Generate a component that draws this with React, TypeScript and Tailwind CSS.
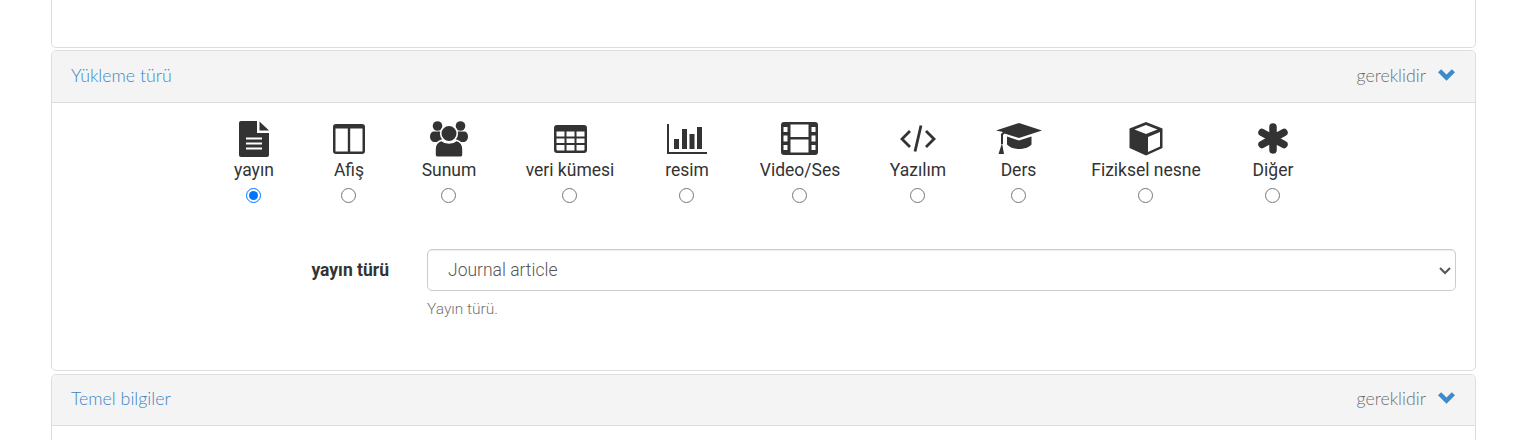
import { FC, ReactNode } from 'react'

const Chevron: FC = () => (
  <svg viewBox="0 0 16 11" className="w-[17px] h-[12px] ml-3 mb-[2px] fill-[#3d8bcd]">
    <path d="M8 11 0 3 3 0 8 5 13 0 16 3Z" />
  </svg>
)

const IconFile: FC = () => (
  <svg viewBox="0 0 30 36" className="w-[30px] h-[36px]">
    <path fill="#333" d="M0 2C0 .9.9 0 2 0H18V12H30V34C30 35.100 29.100 36 28 36H2C.9 36 0 35.100 0 34Z" />
    <path fill="#333" d="M20.500 .5 30 9.500H20.500Z" />
    <path stroke="#fff" strokeWidth="2" d="M7 17.500H23M7 22.500H23M7 27.500H23" />
  </svg>
)

const IconColumns: FC = () => (
  <svg viewBox="0 0 32 30" className="w-[32px] h-[30px]">
    <rect width="32" height="30" rx="3" fill="#333" />
    <path fill="#fff" d="M2.500 4.500H14.800V27.500H2.500ZM17.200 4.500H29.500V27.500H17.200Z" />
  </svg>
)

const IconUsers: FC = () => (
  <svg viewBox="0 0 38 36" className="w-[38px] h-[36px] fill-[#333]">
    <circle cx="7.500" cy="5" r="4.800" />
    <circle cx="30.500" cy="5" r="4.800" />
    <path d="M4 10.500h8v10.500H5c-3 0-5-2-5-5.500 0-3 1.500-5 4-5z" />
    <path d="M34 10.500h-8v10.500h7c3 0 5-2 5-5.500 0-3-1.500-5-4-5z" />
    <circle cx="19" cy="12.500" r="8.300" stroke="#fff" strokeWidth="1.600" />
    <path stroke="#fff" strokeWidth="1.600" d="M11.500 19.300c2 1.700 4.800 2.600 7.500 2.600s5.500-.9 7.500-2.600c4 1.200 6.500 4.700 6.500 8.700v6c0 1.400-1 2.200-2.200 2.200H7.200C6 36.200 5 35.400 5 34v-6c0-4 2.500-7.500 6.500-8.700z" />
  </svg>
)

const IconTable: FC = () => (
  <svg viewBox="0 0 33 28" className="w-[33px] h-[28px] ml-[1px]">
    <rect width="33" height="28" rx="3" fill="#333" />
    <path fill="#fff" d="M2.500 6.500h8v5h-8zM12.500 6.500h8v5h-8zM22.500 6.500h8v5h-8zM2.500 13.500h8v4.500h-8zM12.500 13.500h8v4.500h-8zM22.500 13.500h8v4.500h-8zM2.500 20h8v5.500h-7q-1 0-1-1zM12.500 20h8v5.500h-8zM22.500 20h8v4.500q0 1-1 1h-7z" />
  </svg>
)

const IconChart: FC = () => (
  <svg viewBox="0 0 40 30" className="w-[40px] h-[30px] fill-[#333]">
    <path d="M0 0H2V28H40V30H0Z" />
    <path d="M7 15h5v10H7zM15 5h5v20h-5zM22.500 10h5v15h-5zM30 3h5v22h-5z" />
  </svg>
)

const IconFilm: FC = () => (
  <svg viewBox="0 0 37 33" className="w-[37px] h-[33px]">
    <rect width="37" height="33" rx="3" fill="#333" />
    <path fill="#fff" d="M9.500 2.500h18v12.500h-18zM9.500 17.500h18v13h-18zM2.500 5h4v5h-4zM30.500 5h4v5h-4zM2.500 13.500h4v6h-4zM30.500 13.500h4v6h-4zM2.500 23h4v5h-4zM30.500 23h4v5h-4z" />
  </svg>
)

const IconCode: FC = () => (
  <svg viewBox="0 0 36 27" className="w-[36px] h-[27px] fill-none stroke-[#333]" strokeWidth="2.800">
    <path d="M10 6 2 14 10 22M26 6 34 14 26 22M21 .5 15 26.500" />
  </svg>
)

const IconCap: FC = () => (
  <svg viewBox="0 0 46 31" className="w-[46px] h-[31px] ml-[1px] fill-[#333]">
    <path d="M23 0 46 7.500 23 15 8.500 10.500 7 12V21H5V11L7 9 0 7.500Z" />
    <path d="M11 13.500 23 17.500 35.500 13.500V21.500C33 24.500 28 26 23 26s-9.500-1.500-12-4.500Z" />
    <path d="M6 20 8 31H2.500Z" />
  </svg>
)

const IconCube: FC = () => (
  <svg viewBox="0 0 34 34" className="w-[34px] h-[34px]">
    <path fill="#333" d="M17 0 33.500 6.500V26L17 33.500 .5 26V6.500Z" />
    <path fill="#fff" d="M17 3 28.500 7.500 17 12 5.500 7.500ZM19 15 31 10V24.500L19 30Z" />
  </svg>
)

const IconAsterisk: FC = () => (
  <svg viewBox="0 0 30 31" className="w-[30px] h-[31px] fill-none stroke-[#333]" strokeWidth="7.500" strokeLinecap="round">
    <path d="M15 4V27M4 9.500 26 21.500M26 9.500 4 21.500" />
  </svg>
)

const types: { label: string; icon: ReactNode; width: string; checked?: boolean }[] = [
  { label: 'yayın', icon: <IconFile />, width: 'w-[91px]', checked: true },
  { label: 'Afiş', icon: <IconColumns />, width: 'w-[99px]' },
  { label: 'Sunum', icon: <IconUsers />, width: 'w-[101px]' },
  { label: 'veri kümesi', icon: <IconTable />, width: 'w-[141px]' },
  { label: 'resim', icon: <IconChart />, width: 'w-[93px]' },
  { label: 'Video/Ses', icon: <IconFilm />, width: 'w-[133px]' },
  { label: 'Yazılım', icon: <IconCode />, width: 'w-[103px]' },
  { label: 'Ders', icon: <IconCap />, width: 'w-[98px]' },
  { label: 'Fiziksel nesne', icon: <IconCube />, width: 'w-[157px]' },
  { label: 'Diğer', icon: <IconAsterisk />, width: 'w-[97px]' },
]

const PanelHeader: FC<{ title: string; height: string }> = ({ title, height }) => (
  <div className={`flex items-center justify-between ${height} pl-[19px] pr-[20px] bg-[#f4f4f4] border-b border-[#dddddd] rounded-t-[5px] font-['Lato',sans-serif] font-light text-[17.75px]`}>
    <span className="text-[#3d86c6]">{title}</span>
    <span className="flex items-center text-[#6e6e6e]">
      gereklidir
      <Chevron />
    </span>
  </div>
)

export default function App() {
  return (
    <div className="h-[440px] overflow-hidden bg-white pl-[51px] pr-[42px] font-['Roboto',sans-serif] text-[#333333] text-[17.5px]">
      <div className="h-[50px] -mt-[2px] mb-[2px] border border-[#dddddd] rounded-b-[5px] border-t-0" />
      <div className="h-[321px] border border-[#dddddd] rounded-[5px] mb-[3px]">
        <PanelHeader title="Yükleme türü" height="h-[52px] pb-[2px]" />
        <div className="flex pt-[17px] pl-[156px]">
          {types.map((t) => (
            <label key={t.label} className={`flex flex-col items-center ${t.width}`}>
              <span className="flex items-center justify-center h-[37px]">{t.icon}</span>
              <span className="mt-[1px] pl-[1px] leading-[24px] whitespace-nowrap">{t.label}</span>
              <input type="radio" name="type" defaultChecked={t.checked} className="mt-[6px] w-[15px] h-[15px] accent-[#0075ff]" />
            </label>
          ))}
        </div>
        <div className="flex mt-[46px] px-[19px]">
          <div className="w-[319px] pt-[9px] pr-[1px] text-right font-bold leading-[24px]">yayın türü</div>
          <div className="flex-1 ml-[37px]">
            <div className="relative">
              <select className="appearance-none w-full h-[42px] pl-[20px] pr-8 border border-[#cccccc] rounded-[5px] bg-white text-[#555555] text-[17.5px] font-light shadow-[inset_0_1px_1px_rgba(0,0,0,0.075)]">
                <option>Journal article</option>
              </select>
              <svg viewBox="0 0 12 8" className="absolute right-[5px] top-[18px] w-[12px] h-[8px] fill-none stroke-[#555555]" strokeWidth="2">
                <path d="M1 1 6 6 11 1" />
              </svg>
            </div>
            <p className="mt-[8px] text-[15.500px] leading-[20px] font-light text-[#737373]">Yayın türü.</p>
          </div>
        </div>
      </div>
      <div className="border border-[#dddddd] rounded-[5px] h-[100px]">
        <PanelHeader title="Temel bilgiler" height="h-[51px] pb-[3px]" />
      </div>
    </div>
  )
}
